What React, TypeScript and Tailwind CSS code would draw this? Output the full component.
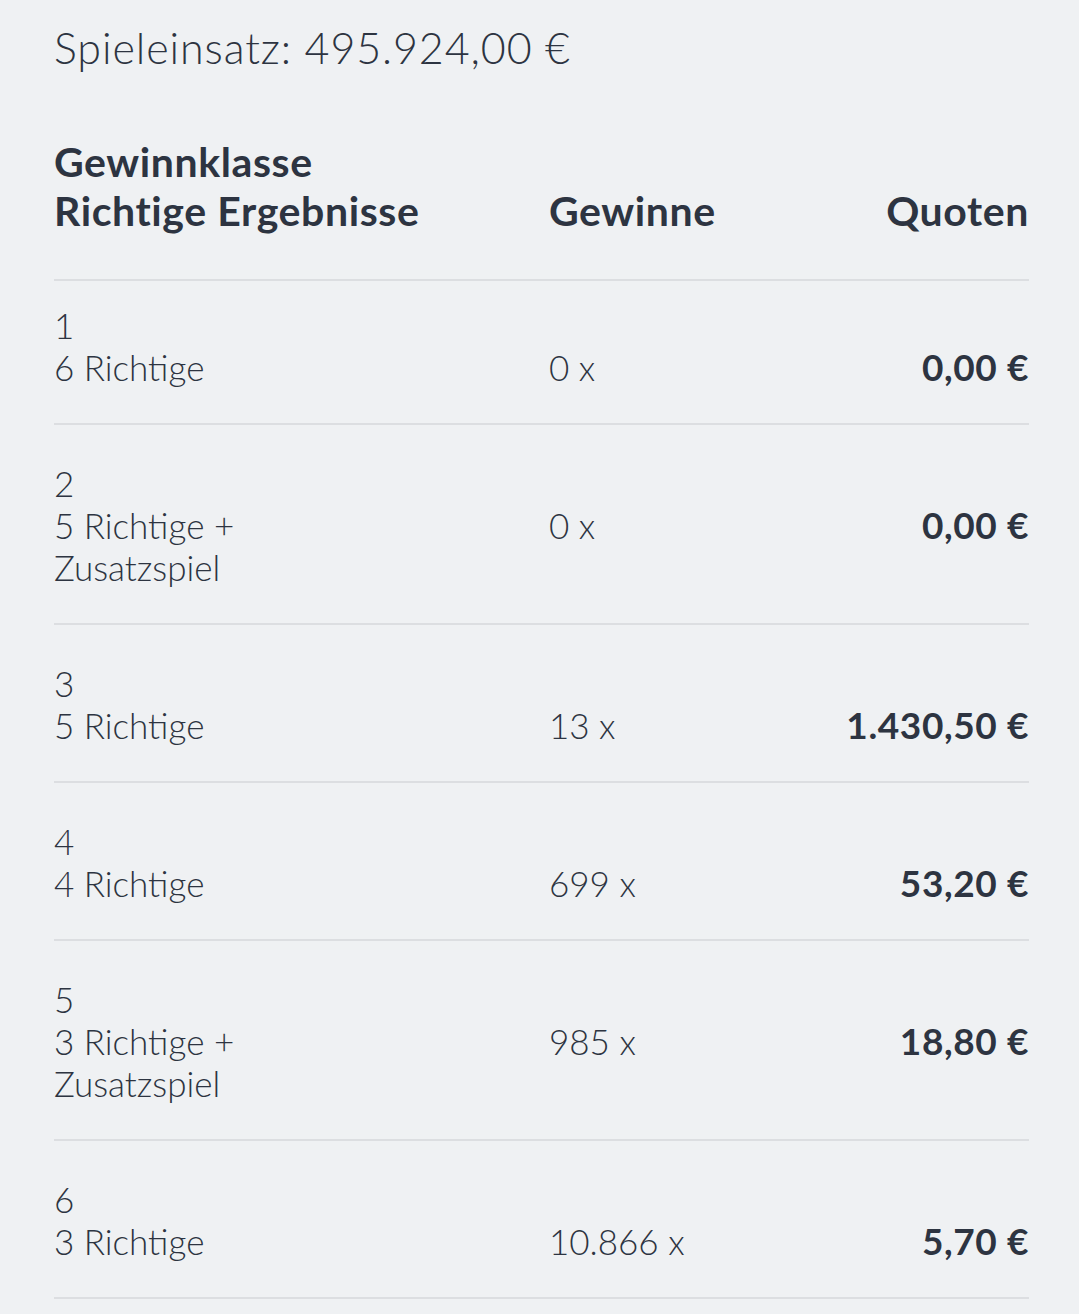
const rows = [
  { klasse: '1', label: ['6 Richtige'], gewinne: '0 x', quote: '0,00 €' },
  { klasse: '2', label: ['5 Richtige +', 'Zusatzspiel'], gewinne: '0 x', quote: '0,00 €' },
  { klasse: '3', label: ['5 Richtige'], gewinne: '13 x', quote: '1.430,50 €' },
  { klasse: '4', label: ['4 Richtige'], gewinne: '699 x', quote: '53,20 €' },
  { klasse: '5', label: ['3 Richtige +', 'Zusatzspiel'], gewinne: '985 x', quote: '18,80 €' },
  { klasse: '6', label: ['3 Richtige'], gewinne: '10.866 x', quote: '5,70 €' },
];

export default function App() {
  return (
    <div className="min-h-screen bg-[#eff1f3] text-[#2d3441] pl-[54px] pr-[50px] pt-[21px] pb-10 font-['Lato',sans-serif]">
      <p className="text-[43px] font-light leading-[54px] tracking-[0.9px]">Spieleinsatz: 495.924,00 €</p>

      <div className="mt-[62px] grid grid-cols-[495px_1fr_1fr] items-end border-b-2 border-[#dcdee1] pb-[44px] text-[41px] font-bold leading-[49px] tracking-[0.6px]">
        <div>
          <div>Gewinnklasse</div>
          <div>Richtige Ergebnisse</div>
        </div>
        <div>Gewinne</div>
        <div className="text-right">Quoten</div>
      </div>

      {rows.map((row, i) => (
        <div
          key={row.klasse}
          className={`grid grid-cols-[495px_1fr_1fr] border-b-2 border-[#dcdee1] text-[35px] leading-[42px] ${
            i === 0 ? 'pt-[23px] pb-[35px]' : 'pt-[37px] pb-[35px]'
          }`}
        >
          <div className="font-light">
            <div>{row.klasse}</div>
            {row.label.map((l) => (
              <div key={l}>{l}</div>
            ))}
          </div>
          <div className="pt-[42px] font-light">{row.gewinne}</div>
          <div className="pt-[42px] text-right text-[37px] font-bold tracking-[0.6px]">{row.quote}</div>
        </div>
      ))}
    </div>
  );
}
